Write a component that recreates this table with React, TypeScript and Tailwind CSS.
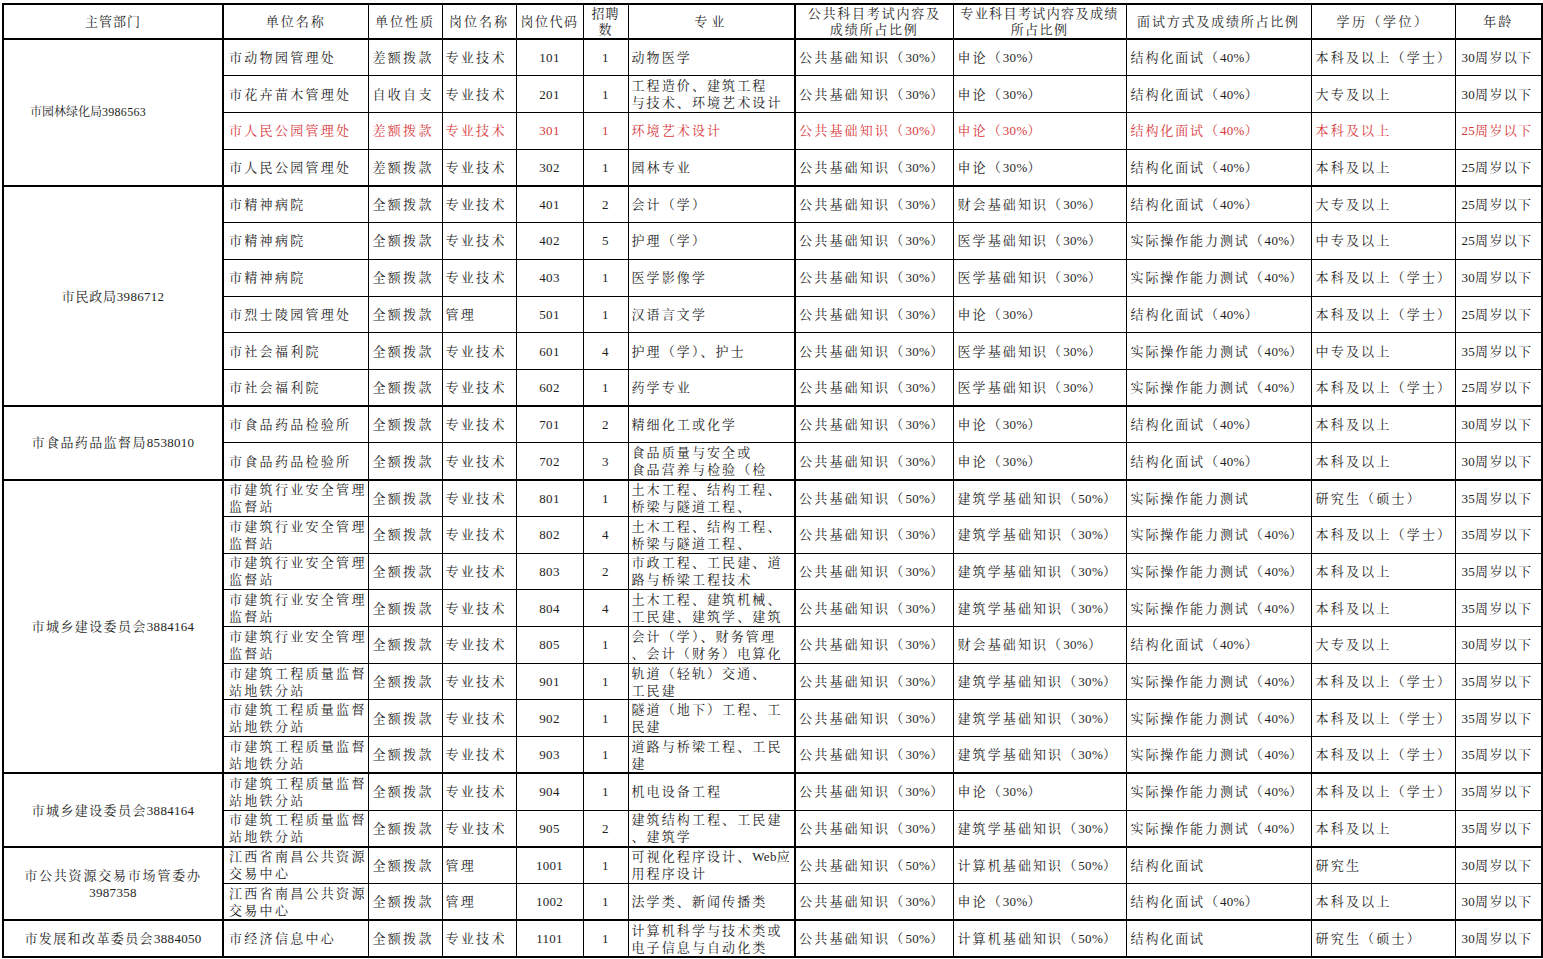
import React from "react";

type R = {
  u: string[];
  t: string;
  p: string;
  c: string;
  n: string;
  m: string[];
  a: string;
  b: string;
  i: string;
  e: string;
  g: string;
  red?: boolean;
};

const P30 = "公共基础知识（30%）";
const P50 = "公共基础知识（50%）";
const SL = "申论（30%）";
const JG = "结构化面试（40%）";
const SJ = "实际操作能力测试（40%）";
const YX = "医学基础知识（30%）";
const JZ = "建筑学基础知识（30%）";
const AQ = ["市建筑行业安全管理", "监督站"];
const DT = ["市建筑工程质量监督", "站地铁分站"];
const ZY = ["江西省南昌公共资源", "交易中心"];

const rows: R[] = [
  { u: ["市动物园管理处"], t: "差额拨款", p: "专业技术", c: "101", n: "1", m: ["动物医学"], a: P30, b: SL, i: JG, e: "本科及以上（学士）", g: "30周岁以下" },
  { u: ["市花卉苗木管理处"], t: "自收自支", p: "专业技术", c: "201", n: "1", m: ["工程造价、建筑工程", "与技术、环境艺术设计"], a: P30, b: SL, i: JG, e: "大专及以上", g: "30周岁以下" },
  { u: ["市人民公园管理处"], t: "差额拨款", p: "专业技术", c: "301", n: "1", m: ["环境艺术设计"], a: P30, b: SL, i: JG, e: "本科及以上", g: " 25周岁以下", red: true },
  { u: ["市人民公园管理处"], t: "差额拨款", p: "专业技术", c: "302", n: "1", m: ["园林专业"], a: P30, b: SL, i: JG, e: "本科及以上", g: "25周岁以下" },
  { u: ["市精神病院"], t: "全额拨款", p: "专业技术", c: "401", n: "2", m: ["会计（学）"], a: P30, b: "财会基础知识（30%）", i: JG, e: "大专及以上", g: "25周岁以下" },
  { u: ["市精神病院"], t: "全额拨款", p: "专业技术", c: "402", n: "5", m: ["护理（学）"], a: P30, b: YX, i: SJ, e: "中专及以上", g: "25周岁以下" },
  { u: ["市精神病院"], t: "全额拨款", p: "专业技术", c: "403", n: "1", m: ["医学影像学"], a: P30, b: YX, i: SJ, e: "本科及以上（学士）", g: "30周岁以下" },
  { u: ["市烈士陵园管理处"], t: "全额拨款", p: "管理", c: "501", n: "1", m: ["汉语言文学"], a: P30, b: SL, i: JG, e: "本科及以上（学士）", g: "25周岁以下" },
  { u: ["市社会福利院"], t: "全额拨款", p: "专业技术", c: "601", n: "4", m: ["护理（学）、护士"], a: P30, b: YX, i: SJ, e: "中专及以上", g: "35周岁以下" },
  { u: ["市社会福利院"], t: "全额拨款", p: "专业技术", c: "602", n: "1", m: ["药学专业"], a: P30, b: YX, i: SJ, e: "本科及以上（学士）", g: "25周岁以下" },
  { u: ["市食品药品检验所"], t: "全额拨款", p: "专业技术", c: "701", n: "2", m: ["精细化工或化学"], a: P30, b: SL, i: JG, e: "本科及以上", g: "30周岁以下" },
  { u: ["市食品药品检验所"], t: "全额拨款", p: "专业技术", c: "702", n: "3", m: ["食品质量与安全或", "食品营养与检验（检"], a: P30, b: SL, i: JG, e: "本科及以上", g: "30周岁以下" },
  { u: AQ, t: "全额拨款", p: "专业技术", c: "801", n: "1", m: ["土木工程、结构工程、", "桥梁与隧道工程、"], a: P50, b: "建筑学基础知识（50%）", i: "实际操作能力测试", e: "研究生（硕士）", g: "35周岁以下" },
  { u: AQ, t: "全额拨款", p: "专业技术", c: "802", n: "4", m: ["土木工程、结构工程、", "桥梁与隧道工程、"], a: P30, b: JZ, i: SJ, e: "本科及以上（学士）", g: "35周岁以下" },
  { u: AQ, t: "全额拨款", p: "专业技术", c: "803", n: "2", m: ["市政工程、工民建、道", "路与桥梁工程技术"], a: P30, b: JZ, i: SJ, e: "本科及以上", g: "35周岁以下" },
  { u: AQ, t: "全额拨款", p: "专业技术", c: "804", n: "4", m: ["土木工程、建筑机械、", "工民建、建筑学、建筑"], a: P30, b: JZ, i: SJ, e: "本科及以上", g: "35周岁以下" },
  { u: AQ, t: "全额拨款", p: "专业技术", c: "805", n: "1", m: ["会计（学）、财务管理", "、会计（财务）电算化"], a: P30, b: "财会基础知识（30%）", i: JG, e: "大专及以上", g: "30周岁以下" },
  { u: DT, t: "全额拨款", p: "专业技术", c: "901", n: "1", m: ["轨道（轻轨）交通、", "工民建"], a: P30, b: JZ, i: SJ, e: "本科及以上（学士）", g: "35周岁以下" },
  { u: DT, t: "全额拨款", p: "专业技术", c: "902", n: "1", m: ["隧道（地下）工程、工", "民建"], a: P30, b: JZ, i: SJ, e: "本科及以上（学士）", g: "35周岁以下" },
  { u: DT, t: "全额拨款", p: "专业技术", c: "903", n: "1", m: ["道路与桥梁工程、工民", "建"], a: P30, b: JZ, i: SJ, e: "本科及以上（学士）", g: "35周岁以下" },
  { u: DT, t: "全额拨款", p: "专业技术", c: "904", n: "1", m: ["机电设备工程"], a: P30, b: SL, i: SJ, e: "本科及以上（学士）", g: "35周岁以下" },
  { u: DT, t: "全额拨款", p: "专业技术", c: "905", n: "2", m: ["建筑结构工程、工民建", "、建筑学"], a: P30, b: JZ, i: SJ, e: "本科及以上", g: "35周岁以下" },
  { u: ZY, t: "全额拨款", p: "管理", c: "1001", n: "1", m: ["可视化程序设计、Web应", "用程序设计"], a: P50, b: "计算机基础知识（50%）", i: "结构化面试", e: "研究生", g: "30周岁以下" },
  { u: ZY, t: "全额拨款", p: "管理", c: "1002", n: "1", m: ["法学类、新闻传播类"], a: P30, b: SL, i: JG, e: "本科及以上", g: "30周岁以下" },
  { u: ["市经济信息中心"], t: "全额拨款", p: "专业技术", c: "1101", n: "1", m: ["计算机科学与技术类或", "电子信息与自动化类"], a: P50, b: "计算机基础知识（50%）", i: "结构化面试", e: "研究生（硕士）", g: "30周岁以下" },
];

const groups: { start: number; span: number; name: string[]; cls: string }[] = [
  { start: 0, span: 4, name: ["市园林绿化局3986563"], cls: "tracking-[0px] pr-[50px] text-[12px]" },
  { start: 4, span: 6, name: ["市民政局3986712"], cls: "tracking-[0.8px]" },
  { start: 10, span: 2, name: ["市食品药品监督局8538010"], cls: "tracking-[1.4px]" },
  { start: 12, span: 8, name: ["市城乡建设委员会3884164"], cls: "tracking-[1.4px]" },
  { start: 20, span: 2, name: ["市城乡建设委员会3884164"], cls: "tracking-[1.4px]" },
  { start: 22, span: 2, name: ["市公共资源交易市场管委办", "3987358"], cls: "tracking-[1.8px]" },
  { start: 24, span: 1, name: ["市发展和改革委员会3884050"], cls: "tracking-[1.4px]" },
];

const colCls = [
  "justify-center text-center",
  "pl-[5px] tracking-[2.3px]",
  "pl-[4px] tracking-[2.3px]",
  "pl-[3px] tracking-[2.3px]",
  "justify-center text-center tracking-[1.5px]",
  "justify-center text-center",
  "pl-[3px] tracking-[2.1px]",
  "pl-[3px] tracking-[2.2px]",
  "pl-[4px] tracking-[2.1px]",
  "pl-[4px] tracking-[1.9px]",
  "pl-[4px] tracking-[2.2px]",
  "pl-[6px] tracking-[1.3px]",
];

function Txt({ s }: { s: string }) {
  const parts = s.split(/([0-9%A-Za-z]+)/);
  return (
    <>
      {parts.map((p, i) =>
        /^[0-9%A-Za-z]+$/.test(p) ? (
          <span key={i} className="tracking-[0.3px]">
            {p}
          </span>
        ) : (
          <React.Fragment key={i}>{p}</React.Fragment>
        )
      )}
    </>
  );
}

function Cell({
  lines,
  k,
  extra,
  tdCls,
  rowSpan,
}: {
  lines: string[];
  k: number;
  extra?: string;
  tdCls?: string;
  rowSpan?: number;
}) {
  return (
    <td rowSpan={rowSpan} className={`border border-black p-0 align-middle ${tdCls ?? ""}`}>
      <div className={`flex items-center overflow-hidden whitespace-nowrap ${colCls[k]} ${extra ?? ""}`}>
        <div className="leading-[17px]">
          {lines.map((l, i) => (
            <div key={i}>
              <Txt s={l} />
            </div>
          ))}
        </div>
      </div>
    </td>
  );
}

function Head({ lines, tdCls, extra }: { lines: string[]; tdCls?: string; extra?: string }) {
  return (
    <td className={`border border-b-2 border-black p-0 align-middle ${tdCls ?? ""}`}>
      <div className={`flex h-[33px] items-center justify-center overflow-hidden whitespace-nowrap text-center ${extra ?? "tracking-[2px]"}`}>
        <div className="leading-[16px]">
          {lines.map((l, i) => (
            <div key={i}>{l}</div>
          ))}
        </div>
      </div>
    </td>
  );
}

export default function App() {
  const widths = [220, 145, 74, 74, 67, 45, 167, 158, 173, 185, 144, 87];
  return (
    <div className="h-[959px] w-[1543px] overflow-hidden bg-white pl-[2px] pt-[3px] font-['Liberation_Serif','Noto_Serif_CJK_SC','Noto_Sans_CJK_SC',serif] text-[13px] text-[#1e1e1e]">
      <table className="w-[1539px] table-fixed border-collapse border-2 border-black">
        <colgroup>
          {widths.map((w, i) => (
            <col key={i} style={{ width: w }} />
          ))}
        </colgroup>
        <tbody>
          <tr className="h-[35px]">
            <Head lines={["主管部门"]} extra="tracking-[1px]" />
            <Head lines={["单位名称"]} tdCls="border-l-2" />
            <Head lines={["单位性质"]} />
            <Head lines={["岗位名称"]} />
            <Head lines={["岗位代码"]} extra="tracking-[1.5px]" />
            <Head lines={["招聘", "数"]} extra="tracking-[1px]" />
            <Head lines={["专业"]} extra="tracking-[4px]" />
            <Head lines={["公共科目考试内容及", "成绩所占比例"]} tdCls="border-l-2" extra="tracking-[1.8px]" />
            <Head lines={["专业科目考试内容及成绩", "所占比例"]} extra="tracking-[1.4px]" />
            <Head lines={["面试方式及成绩所占比例"]} extra="tracking-[1.8px]" />
            <Head lines={["学历（学位）"]} extra="tracking-[2.5px]" />
            <Head lines={["年龄"]} extra="tracking-[2px]" />
          </tr>
          {rows.map((r, idx) => {
            const g = groups.find((x) => x.start === idx);
            const top = g ? "border-t-2" : "";
            const red = r.red ? "text-[#d8373b]" : "";
            const h = "h-[34.8px]";
            return (
              <tr key={idx} className="h-[36.72px]">
                {g && <Cell lines={g.name} k={0} rowSpan={g.span} tdCls={top} extra={g.cls} />}
                <Cell lines={r.u} k={1} tdCls={`${top} border-l-2`} extra={`${h} ${red}`} />
                <Cell lines={[r.t]} k={2} tdCls={top} extra={`${h} ${red}`} />
                <Cell lines={[r.p]} k={3} tdCls={top} extra={`${h} ${red}`} />
                <Cell lines={[r.c]} k={4} tdCls={top} extra={`${h} ${red}`} />
                <Cell lines={[r.n]} k={5} tdCls={top} extra={`${h} ${red}`} />
                <Cell lines={r.m} k={6} tdCls={top} extra={`${h} ${red}`} />
                <Cell lines={[r.a]} k={7} tdCls={`${top} border-l-2`} extra={`${h} ${red}`} />
                <Cell lines={[r.b]} k={8} tdCls={top} extra={`${h} ${red}`} />
                <Cell lines={[r.i]} k={9} tdCls={top} extra={`${h} ${red}`} />
                <Cell lines={[r.e]} k={10} tdCls={top} extra={`${h} ${red}`} />
                <Cell lines={[r.g]} k={11} tdCls={top} extra={`${h} ${red}`} />
              </tr>
            );
          })}
        </tbody>
      </table>
    </div>
  );
}
